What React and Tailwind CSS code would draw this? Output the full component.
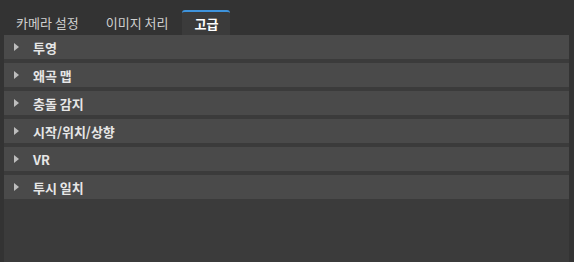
const tabs = ["카메라 설정", "이미지 처리", "고급"];
const sections = ["투영", "왜곡 맵", "충돌 감지", "시작/위치/상향", "VR", "투시 일치"];

function Caret() {
  return (
    <svg width="5" height="8" viewBox="0 0 5 8" className="shrink-0">
      <path d="M0 0 L5 4 L0 8 Z" fill="#bdbdbd" />
    </svg>
  );
}

export default function App() {
  return (
    <div
      className="w-[574px] h-[262px] bg-[#333333] flex flex-col overflow-hidden"
      style={{ fontFamily: '"Noto Sans CJK KR", "Noto Sans", sans-serif' }}
    >
      {/* tab strip */}
      <div className="h-[35px] flex items-end pl-[4px] shrink-0">
        <div className="h-[25px] flex items-center pl-[12px] pr-[15px] text-[13px] text-[#cfcfcf]">
          {tabs[0]}
        </div>
        <div className="h-[25px] flex items-center px-[12px] text-[13px] text-[#cfcfcf]">
          {tabs[1]}
        </div>
        <div className="h-[25px] w-[48px] ml-[2px] flex items-center justify-center text-[13px] font-bold text-white bg-[#3b3b3b] border-t-2 border-[#3e93dc] rounded-t-[3px]">
          {tabs[2]}
        </div>
      </div>

      {/* panel */}
      <div className="flex-1 flex pl-[4px]">
        <div className="flex-1 bg-[#3b3b3b] flex flex-col gap-[4px]">
          {sections.map((s) => (
            <div key={s} className="h-[24px] bg-[#4a4a4a] flex items-center pl-[10px] gap-[14px]">
              <Caret />
              <span className="text-[13px] font-bold text-[#e6e6e6] leading-none">{s}</span>
            </div>
          ))}
        </div>
        <div className="w-[5px] bg-[#333333]" />
      </div>
    </div>
  );
}
